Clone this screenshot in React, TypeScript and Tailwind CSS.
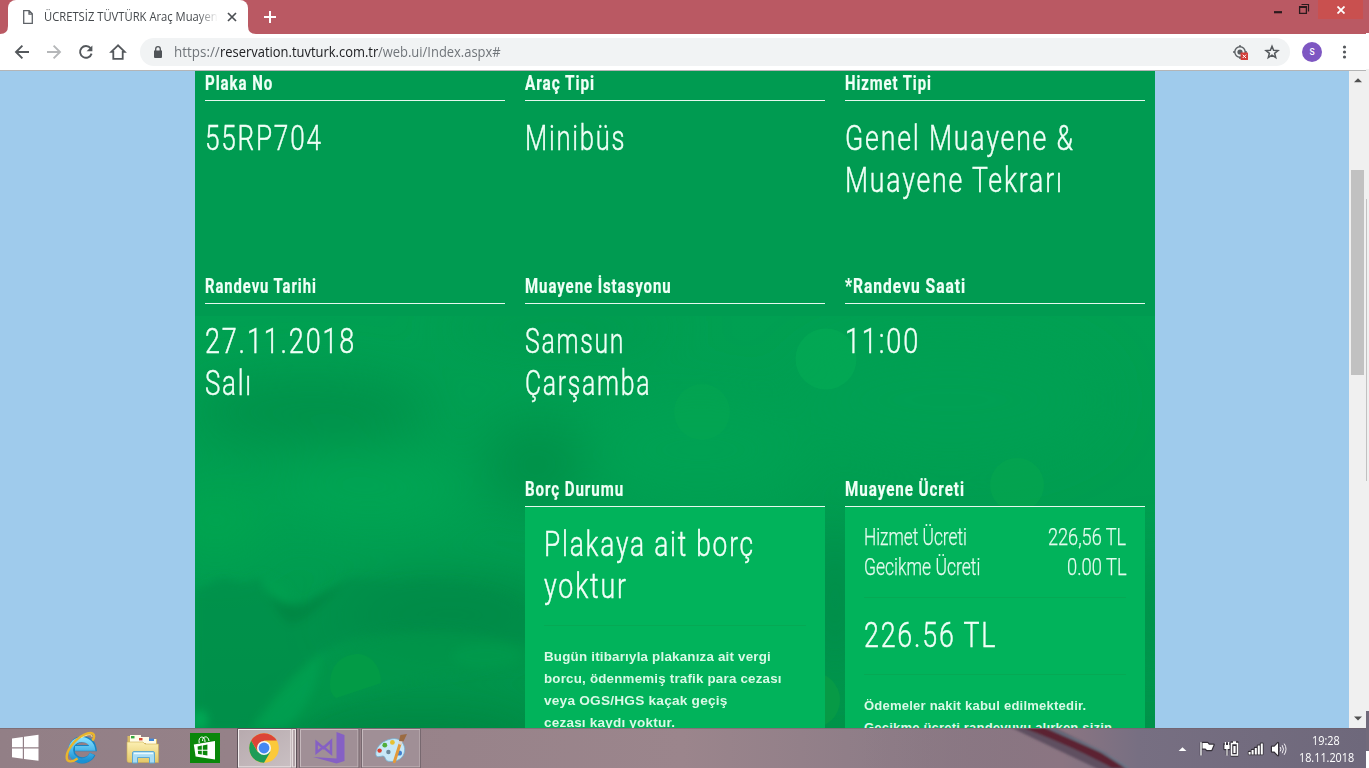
import { useLayoutEffect, useRef } from "react";

type FitProps = { text: string; width: number; className?: string };

/* Condenses a line of text horizontally so that it takes the given width. */
function Fit({ text, width, className = "" }: FitProps) {
  const ref = useRef<HTMLSpanElement>(null);
  useLayoutEffect(() => {
    const el = ref.current;
    if (el) el.style.transform = `scaleX(${width / el.offsetWidth})`;
  }, [text, width]);
  return (
    <div style={{ width }} className={className}>
      <span ref={ref} className="inline-block origin-left whitespace-nowrap align-top">
        {text}
      </span>
    </div>
  );
}

const Heading = ({ text, width }: { text: string; width: number }) => (
  <div className="h-[30px] border-b border-[#e6f8ee] pt-px">
    <Fit
      text={text}
      width={width}
      className="font-[Roboto,sans-serif] text-[19.5px] leading-[24px] font-bold tracking-[1.2px] text-[#effff6] [-webkit-text-stroke:0.2px_#effff6]"
    />
  </div>
);

const Big = ({ text, width }: { text: string; width: number }) => (
  <Fit
    text={text}
    width={width}
    className="font-[Roboto,sans-serif] text-[35px] leading-[42px] font-light tracking-[2.4px] text-[#effff6] [-webkit-text-stroke:0.45px_#effff6]"
  />
);

const Note = ({ text, width }: { text: string; width: number }) => (
  <Fit
    text={text}
    width={width}
    className="font-['Liberation_Sans',sans-serif] text-[13px] leading-[22px] font-bold tracking-[0.2px] text-[#d9f9e6]"
  />
);

type Line = [string, number];

const Cell = ({ title, lines }: { title: Line; lines: Line[] }) => (
  <div className="h-[203px] w-[300px]">
    <Heading text={title[0]} width={title[1]} />
    <div className="pt-[17px]">
      {lines.map(([t, w]) => (
        <Big key={t} text={t} width={w} />
      ))}
    </div>
  </div>
);

const Fee = ({ label, amount }: { label: Line; amount: Line }) => (
  <div className="flex h-[30px] justify-between font-[Roboto,sans-serif] text-[24px] leading-[30px] font-light text-[#e4fbee] [-webkit-text-stroke:0.25px_#e4fbee]">
    <Fit text={label[0]} width={label[1]} />
    <Fit text={amount[0]} width={amount[1]} />
  </div>
);

const Rule = () => <div className="h-px bg-[#06a954]" />;

function Backdrop() {
  return (
    <svg className="absolute inset-0 h-full w-full" viewBox="195 71 960 657">
      <defs>
        <filter id="b30" x="-50%" y="-50%" width="200%" height="200%">
          <feGaussianBlur stdDeviation="26" />
        </filter>
        <filter id="b4" x="-50%" y="-50%" width="200%" height="200%">
          <feGaussianBlur stdDeviation="4" />
        </filter>
        <linearGradient id="low" x1="0" y1="0" x2="0" y2="1">
          <stop offset="0" stopColor="#00a052" />
          <stop offset="0.6" stopColor="#009d50" />
          <stop offset="1" stopColor="#00934a" />
        </linearGradient>
        <clipPath id="clip">
          <rect x="195" y="316" width="960" height="412" />
        </clipPath>
      </defs>
      <rect x="195" y="71" width="960" height="657" fill="#009b51" />
      <g clipPath="url(#clip)">
        <rect x="195" y="316" width="960" height="412" fill="url(#low)" />
        <g filter="url(#b30)">
          <ellipse cx="310" cy="412" rx="120" ry="34" fill="#00914a" />
          <ellipse cx="535" cy="465" rx="50" ry="45" fill="#00914a" />
          <ellipse cx="560" cy="328" rx="120" ry="16" fill="#00974e" />
          <ellipse cx="370" cy="490" rx="100" ry="36" fill="#00a552" />
          <ellipse cx="215" cy="520" rx="50" ry="35" fill="#03a650" />
          <ellipse cx="700" cy="450" rx="110" ry="50" fill="#00a253" />
          <ellipse cx="950" cy="400" rx="150" ry="60" fill="#00a052" />
          <ellipse cx="835" cy="600" rx="30" ry="80" fill="#008c48" />
          <ellipse cx="1155" cy="610" rx="20" ry="60" fill="#008f49" />
          <ellipse cx="450" cy="615" rx="110" ry="35" fill="#008845" />
          <ellipse cx="420" cy="740" rx="130" ry="25" fill="#008341" />
        </g>
        <g filter="url(#b4)">
          <path d="M195 590 L222 578 L246 583 L262 576 C280 602 300 608 310 600 L352 578 L400 582 C450 575 505 590 530 612 L530 650 C470 620 380 618 330 648 C290 668 270 705 255 728 L195 728Z" fill="#008c48" opacity="0.6" />
          <path d="M262 574 C275 592 288 600 300 606 L352 578 C330 592 312 622 290 624 C276 616 268 594 262 574Z" fill="#008341" opacity="0.65" />
          <path d="M258 574 C266 596 278 604 296 604 L284 586Z" fill="#009f50" />
          <path d="M530 645 C440 622 370 630 325 660 C300 680 275 705 260 728 L290 728 C340 694 430 672 530 668Z" fill="#00964a" opacity="0.7" />
          <path d="M322 652 C300 672 270 700 252 728 L285 728 C312 705 318 680 322 652Z" fill="#00a050" opacity="0.8" />
          <ellipse cx="486" cy="656" rx="34" ry="12" fill="#009b4d" opacity="0.6" />
          <ellipse cx="200" cy="720" rx="8" ry="10" fill="#00a854" />
        </g>
        <circle cx="826" cy="359" r="30.5" fill="#03aa55" opacity="0.65" />
        <circle cx="702" cy="412" r="28" fill="#06aa51" opacity="0.35" />
        <circle cx="1017" cy="485" r="27" fill="#07a94e" opacity="0.45" />
        <circle cx="812" cy="700" r="28" fill="#0a9d45" opacity="0.7" />
        <path d="M330 684 C330 662 345 654 359 654 C373 656 381 668 381 683 L336 698 C331 694 330 690 330 684Z" fill="#029b46" />
      </g>
    </svg>
  );
}

const UI = "font-['Open_Sans','Noto_Sans',sans-serif]";

function TitleBar() {
  return (
    <div className="flex h-[34px] bg-[#ba5963]">
      <svg width="8" height="34" viewBox="0 0 8 34">
        <path d="M8 26 V34 H0 Q8 34 8 26Z" fill="#fff" />
      </svg>
      <div className="flex h-[34px] w-[240px] items-center rounded-t-[8px] bg-white pl-[15px]">
        <svg width="10" height="14" viewBox="0 0 10 14" fill="none" stroke="#5f6368" strokeWidth="1.3">
          <path d="M0.7 0.7 H6.2 L9.3 3.8 V13.3 H0.7Z M6 0.9 V4.1 H9.2" />
        </svg>
        <div className="ml-[11px] w-[174px] overflow-hidden mask-r-from-88%">
          <Fit
            text="ÜCRETSİZ TÜVTÜRK Araç Muayen"
            width={174}
            className={"font-['Open_Sans','Noto_Sans',sans-serif] text-[12px] leading-[18px] text-[#45494d]"}
          />
        </div>
        <svg className="ml-[9px]" width="10" height="10" viewBox="0 0 10 10" stroke="#4b4f53" strokeWidth="1.7">
          <path d="M1 1 L9 9 M9 1 L1 9" />
        </svg>
      </div>
      <svg width="8" height="34" viewBox="0 0 8 34">
        <path d="M0 26 V34 H8 Q0 34 0 26Z" fill="#fff" />
      </svg>
      <svg className="mt-[11px] ml-2" width="12" height="12" viewBox="0 0 12 12" stroke="#fff" strokeWidth="2">
        <path d="M6 0 V12 M0 6 H12" />
      </svg>
      <div className="flex-1" />
      <svg className="mt-[3px] mr-[7px]" width="38" height="14" viewBox="0 0 38 14" fill="none" stroke="#2b1a1d">
        <path d="M1 9.2 H9" strokeWidth="2.2" />
        <path d="M26.6 4 H33.4 V10.4 H26.6Z" strokeWidth="1.3" />
        <path d="M26 4 H34" strokeWidth="2" />
        <path d="M28.5 1.5 H35.5 V8.5" strokeWidth="1.2" />
      </svg>
      <div className="mr-[3px] flex h-[19px] w-[45px] items-center justify-center bg-[#c9504f]">
        <svg width="8" height="8" viewBox="0 0 8 8" stroke="#fff" strokeWidth="1.8">
          <path d="M0.5 0.5 L7.5 7.5 M7.5 0.5 L0.5 7.5" />
        </svg>
      </div>
    </div>
  );
}

function Toolbar() {
  return (
    <div className="flex h-[37px] items-center border-b border-[#b4b5b6] bg-white">
      <svg className="ml-[14px]" width="114" height="18" viewBox="14 43 114 18" fill="none" stroke="#54585c" strokeWidth="1.9">
        <path d="M29 52 H16.2 M22.4 45.6 L16 52 L22.4 58.4" />
        <path d="M47 52 H60 M53.6 45.6 L60 52 L53.6 58.4" stroke="#b5b7b9" />
        <path d="M90.6 48.2 A5.9 5.9 0 1 0 91.6 53.6" />
        <path d="M92.4 45.4 V51.2 H86.6Z" fill="#54585c" stroke="none" />
        <path d="M118 45.3 L111.3 51.8 H113.3 V58.8 H122.7 V51.8 H124.7Z" strokeWidth="1.8" />
      </svg>
      <div className="ml-[12px] flex h-7 w-[1150px] items-center rounded-full bg-[#f1f3f4] pl-[14px]">
        <svg width="8" height="12" viewBox="0 0 8 12">
          <path d="M0 4.5 H8 V11 Q8 12 7 12 H1 Q0 12 0 11Z" fill="#505458" />
          <path d="M1.7 5 V3 A2.3 2.3 0 0 1 6.3 3 V5" fill="none" stroke="#505458" strokeWidth="1.3" />
        </svg>
        <div className="ml-3 flex text-[14px] leading-[20px]">
          <Fit text="https://" width={46} className="font-['Open_Sans','Noto_Sans',sans-serif] text-[#70757a]" />
          <Fit text="reservation.tuvturk.com.tr" width={158} className="font-['Open_Sans','Noto_Sans',sans-serif] text-[#202124]" />
          <Fit text="/web.ui/Index.aspx#" width={123} className="font-['Open_Sans','Noto_Sans',sans-serif] text-[#70757a]" />
        </div>
        <div className="flex-1" />
        <svg className="mr-[10px]" width="48" height="18" viewBox="1232 43 48 18">
          <circle cx="1240" cy="52" r="5.2" fill="none" stroke="#5b5f63" strokeWidth="1.4" />
          <path d="M1240 45 V47 M1233 52 H1235 M1240 57 V59 M1245 52 H1247" stroke="#5b5f63" strokeWidth="1.4" />
          <circle cx="1240" cy="52" r="2.6" fill="#5b5f63" />
          <rect x="1240.6" y="52.6" width="7.4" height="7.4" rx="0.6" fill="#d23f3a" />
          <path d="M1242.7 54.7 L1246 58 M1246 54.7 L1242.7 58" stroke="#fff" strokeWidth="1" />
          <path d="M1272 46.2 L1273.6 50.2 L1278 50.5 L1274.6 53.3 L1275.7 57.6 L1272 55.2 L1268.3 57.6 L1269.4 53.3 L1266 50.5 L1270.4 50.2Z" fill="none" stroke="#54585c" strokeWidth="1.5" />
        </svg>
      </div>
      <div className="ml-[12px] flex h-5 w-5 items-center justify-center rounded-full bg-[#7e57c2] font-[Roboto,sans-serif] text-[8.5px] font-medium text-white">
        S
      </div>
      <svg className="ml-[20px]" width="5" height="14" viewBox="0 0 5 14" fill="#54585c">
        <circle cx="2.5" cy="2" r="1.6" />
        <circle cx="2.5" cy="7" r="1.6" />
        <circle cx="2.5" cy="12" r="1.6" />
      </svg>
    </div>
  );
}

function Scrollbar() {
  return (
    <div className="flex w-[17px] flex-col items-center bg-[#f0f0f0]">
      <svg className="mt-[7px]" width="8" height="5" viewBox="0 0 8 5" fill="#505050">
        <path d="M4 0.3 L8 4.3 H0Z" />
      </svg>
      <div className="mt-[87px] h-[205px] w-[13px] bg-[#c1c1c1]" />
      <div className="flex-1" />
      <svg className="mb-[7px]" width="8" height="5" viewBox="0 0 8 5" fill="#505050">
        <path d="M4 4.5 L8 0.5 H0Z" />
      </svg>
    </div>
  );
}

function Page() {
  return (
    <div className="flex h-[657px] overflow-hidden">
      <div className="flex flex-1 bg-[#9fcbec]">
        <div className="relative ml-[195px] h-[657px] w-[960px] overflow-hidden">
          <Backdrop />
          <div className="relative grid grid-cols-[300px_300px_300px] gap-x-5 pl-[10px]">
            <Cell title={["Plaka No", 68]} lines={[["55RP704", 118]]} />
            <Cell title={["Araç Tipi", 70]} lines={[["Minibüs", 101]]} />
            <Cell title={["Hizmet Tipi", 87]} lines={[["Genel Muayene &", 230], ["Muayene Tekrarı", 219]]} />
            <Cell title={["Randevu Tarihi", 112]} lines={[["27.11.2018", 151], ["Salı", 48]]} />
            <Cell title={["Muayene İstasyonu", 147]} lines={[["Samsun", 100], ["Çarşamba", 126]]} />
            <Cell title={["*Randevu Saati", 121]} lines={[["11:00", 75]]} />
            <div />
            <div className="w-[300px]">
              <Heading text="Borç Durumu" width={99} />
              <div className="h-[260px] bg-[#01b35b] px-[19px] pt-[17px]">
                <Big text="Plakaya ait borç" width={211} />
                <Big text="yoktur" width={84} />
                <div className="mt-[17px] mb-5">
                  <Rule />
                </div>
                <Note text="Bugün itibarıyla plakanıza ait vergi" width={227} />
                <Note text="borcu, ödenmemiş trafik para cezası" width={238} />
                <Note text="veya OGS/HGS kaçak geçiş" width={184} />
                <Note text="cezası kaydı yoktur." width={131} />
              </div>
            </div>
            <div className="w-[300px]">
              <Heading text="Muayene Ücreti" width={120} />
              <div className="h-[260px] bg-[#01b35b] px-[19px] pt-[15px]">
                <Fee label={["Hizmet Ücreti", 103]} amount={["226,56 TL", 78.5]} />
                <Fee label={["Gecikme Ücreti", 116]} amount={["0.00 TL", 59.5]} />
                <div className="mt-[15px] mb-[17px]">
                  <Rule />
                </div>
                <Big text="226.56 TL" width={133} />
                <div className="mt-[17px] mb-5">
                  <Rule />
                </div>
                <Note text="Ödemeler nakit kabul edilmektedir." width={222} />
                <Note text="Gecikme ücreti randevuyu alırken sizin" width={248} />
              </div>
            </div>
          </div>
        </div>
      </div>
      <Scrollbar />
    </div>
  );
}

function Taskbar() {
  return (
    <div className="relative flex h-10 bg-linear-to-r from-[#927f86] via-[#9b858c] to-[#6e687b]">
      <svg className="absolute inset-0" width="1366" height="40" viewBox="0 728 1366 40">
        <defs>
          <linearGradient id="wall" x1="0" y1="0" x2="1" y2="0">
            <stop offset="0" stopColor="#8c7680" stopOpacity="0" />
            <stop offset="0.4" stopColor="#8b7582" />
            <stop offset="0.55" stopColor="#776f82" />
            <stop offset="1" stopColor="#6e687b" />
          </linearGradient>
          <filter id="edge" x="-10%" y="-10%" width="120%" height="120%">
            <feGaussianBlur stdDeviation="0.9" />
          </filter>
        </defs>
        <rect x="860" y="728" width="506" height="40" fill="url(#wall)" />
        <g filter="url(#edge)">
          <path d="M1012 728 L1055 728 L1106 753 L1128 770 L1100 770Z" fill="#5f4f60" />
          <path d="M1024 728 L1044 728 L1100 752 L1124 768 L1112 768 C1088 754 1050 738 1024 728Z" fill="#5b2230" />
          <path d="M1050 728 L1102 752 L1128 768" stroke="#667889" strokeWidth="1.6" fill="none" />
        </g>
        <rect x="0" y="728" width="1366" height="1" fill="#6f6068" opacity="0.55" />
      </svg>
      <svg className="relative" width="421" height="40" viewBox="0 728 421 40">
        <defs>
          <linearGradient id="act" x1="0" y1="0" x2="1" y2="1">
            <stop offset="0" stopColor="#b7aaae" />
            <stop offset="1" stopColor="#c9bfc2" />
          </linearGradient>
          <linearGradient id="ie" x1="0" y1="0" x2="0" y2="1">
            <stop offset="0" stopColor="#7fdcff" />
            <stop offset="1" stopColor="#1a91d4" />
          </linearGradient>
          <linearGradient id="fold" x1="0" y1="0" x2="0" y2="1">
            <stop offset="0" stopColor="#fbefb2" />
            <stop offset="1" stopColor="#e4c868" />
          </linearGradient>
        </defs>
        <path d="M12 738.6 L22.8 737 V747.2 H12Z M24 736.8 L38.5 734.8 V747.2 H24Z M12 748.4 H22.8 V758.8 L12 757.2Z M24 748.4 H38.5 V760.8 L24 758.9Z" fill="#fff" />

        <path d="M92.6 754 A11 10.6 0 1 1 93.4 748.2 H74.6" fill="none" stroke="#1785c4" strokeWidth="6.2" />
        <path d="M92 754 A11 10.6 0 1 1 92.6 748.4 H75" fill="none" stroke="url(#ie)" strokeWidth="4.8" />
        <path d="M92.4 740.6 C97 734 92 730.8 84 734.8 C74 739.8 65.6 751.4 66.8 758.6 C67.8 763 73 761.6 77.6 758.4" fill="none" stroke="#e9b52c" strokeWidth="2.4" />
        <path d="M92 737 C92 733 86 735 81 738" fill="none" stroke="#ffe887" strokeWidth="1" />

        <path d="M127.5 736 H137 L139 739 H157 V762 H127.5Z" fill="#d8bb66" />
        <rect x="130" y="735" width="11" height="7" fill="#fffbe6" />
        <rect x="138" y="737" width="11" height="6" fill="#fffbe6" />
        <rect x="146" y="739" width="10" height="5" fill="#fffbe6" />
        <rect x="131" y="736" width="3.5" height="2.4" fill="#36a93f" />
        <rect x="139" y="738" width="3.5" height="2.4" fill="#d84a34" />
        <rect x="149" y="738.6" width="5" height="2.4" fill="#3f86d8" />
        <path d="M127 742 H143 L145 744 H158.5 V762.5 H129 Q127 762.5 127 760Z" fill="url(#fold)" stroke="#cfae55" strokeWidth="0.6" />
        <path d="M132.5 763 V753 Q132.5 751.5 134 751.5 H153 Q154.5 751.5 154.5 753 V763 H149.5 V757.5 H137.5 V763Z" fill="#a9dcf4" stroke="#5fa9d0" strokeWidth="1" />
        <path d="M134 753.5 H153" stroke="#e9f9ff" strokeWidth="1.4" />

        <rect x="190" y="733" width="30" height="30" fill="#0a870a" />
        <path d="M199.2 743 C197.6 735.4 205.4 735 205 742 M202.6 741 C202.2 736 208.4 735 209 741" fill="none" stroke="#fff" strokeWidth="1" />
        <path d="M193.8 744.6 L215 741 V759.4 L195.6 756.6Z" fill="#fff" />
        <path d="M197.6 746.4 L201.8 745.6 V749.8 H197.8Z M202.8 745.4 L207.4 744.6 V749.8 H202.8Z M197.9 750.8 H201.8 V754.6 L198.1 754.1Z M202.8 750.8 H207.4 V755.4 L202.8 754.8Z" fill="#0a870a" />

        <rect x="238.5" y="729.5" width="52.5" height="37.5" fill="url(#act)" stroke="#f4efef" />
        <path d="M237.5 768 V728.5 H296.5 V768" fill="none" stroke="#5e5259" />
        <rect x="292.5" y="729.5" width="3" height="37.5" fill="#b3a4a9" stroke="#e6dedf" />
        <circle cx="264" cy="748" r="14.8" fill="#fbc93a" />
        <path d="M251.2 740.6 A14.8 14.8 0 0 0 264 762.8 L270.4 751.7 L257.6 751.7Z" fill="#1d9c58" />
        <path d="M251.2 740.6 A14.8 14.8 0 0 1 276.8 740.6 H264 L257.4 751Z" fill="#dc4437" />
        <circle cx="264" cy="748" r="7" fill="#f6f6f6" />
        <circle cx="264" cy="748" r="5.4" fill="#4587f3" />

        <rect x="300.5" y="729.5" width="57.5" height="37.5" fill="#a08f96" stroke="#c6b9bd" />
        <rect x="299.5" y="728.5" width="59.5" height="39.5" fill="none" stroke="#77686f" />
        <path d="M336.5 732 L344.5 735 V761 L336.5 763.4 L313 757 L336.5 758.6Z" fill="#8560c4" />
        <path d="M316.6 742.2 L323.4 748 L331 741 V753.4 L323.4 747 L316.6 752.4Z" fill="none" stroke="#8560c4" strokeWidth="2.5" />

        <rect x="362.5" y="729.5" width="57.5" height="37.5" fill="#a08f96" stroke="#c6b9bd" />
        <rect x="361.5" y="728.5" width="59" height="39.5" fill="none" stroke="#77686f" />
        <path d="M391 739 C401 736.8 405.4 745 404.6 751 C403.6 758.6 396.6 762.6 388 761.2 C384.8 760.6 386 756.4 383 756 C379 756.4 375.6 758.4 375.8 753 C376.6 746 382.6 740.8 391 739Z" fill="#c8e8f7" stroke="#75b1d2" strokeWidth="0.8" />
        <circle cx="379.6" cy="750.6" r="2.2" fill="#d9412f" />
        <circle cx="384.8" cy="745.2" r="2.4" fill="#4fae3a" />
        <circle cx="392.4" cy="742.4" r="2.4" fill="#e8c131" />
        <circle cx="388.4" cy="752" r="2.2" fill="#6d8a9c" />
        <circle cx="399.4" cy="753" r="2.6" fill="#3f7fd0" />
        <path d="M394.4 761.6 L400 744" stroke="#e39a3b" strokeWidth="3" strokeLinecap="round" />
        <path d="M399.6 744.4 L401 740.6" stroke="#d8d8d8" strokeWidth="3.4" />
        <path d="M399 741 L400.4 735 L407 734 L403.4 741.6Z" fill="#9b6b42" />
      </svg>
      <div className="flex-1" />
      <svg className="relative" width="120" height="40" viewBox="1172 728 120 40">
        <path d="M1182.5 747.2 L1186.4 751 H1178.6Z" fill="#fff" />
        <g stroke="#353039" strokeWidth="2.4" strokeLinejoin="round" fill="#353039">
          <path d="M1201 742.6 V755.4" />
          <path d="M1202.5 743 H1207.6 L1209 744.8 H1213.6 L1211.4 750 H1207 L1205.4 748.6 H1202.5Z" />
          <path d="M1231.5 742.5 H1237.5 V755.5 H1231.5Z" />
          <path d="M1224.5 744 H1229.5 V749 H1224.5Z M1227 749 V755" />
          <path d="M1249 752 H1250.6 V754 H1249Z M1252 750 H1253.6 V754 H1252Z M1255 748 H1256.6 V754 H1255Z M1258 745.6 H1259.6 V754 H1258Z M1261 743.6 H1262.4 V754 H1261Z" />
          <path d="M1272 746.8 H1274.4 L1278 743 V755.2 L1274.4 751.6 H1272Z" />
        </g>
        <path d="M1201 742.2 V755.6" stroke="#fff" strokeWidth="1.4" />
        <path d="M1202.5 743 H1207.6 L1209 744.8 H1213.6 L1211.4 750 H1207 L1205.4 748.6 H1202.5Z" fill="#fff" />
        <path d="M1231.5 743.5 H1237.5 V755 H1231.5Z M1233 742 H1236" fill="none" stroke="#fff" strokeWidth="1.5" />
        <path d="M1233.4 746 H1235.6 V753 H1233.4Z" fill="#fff" />
        <path d="M1225.4 742 V745 M1228.6 742 V745 M1227 749 V755.6" stroke="#fff" strokeWidth="1.2" />
        <path d="M1224.4 745 H1229.6 V749 H1224.4Z" fill="#fff" />
        <path d="M1248.6 752 H1250.6 V754.6 H1248.6Z M1251.6 750 H1253.6 V754.6 H1251.6Z M1254.8 748 H1256.8 V754.6 H1254.8Z M1257.8 745.6 H1259.8 V754.6 H1257.8Z M1260.8 743.4 H1262.8 V754.6 H1260.8Z" fill="#fff" />
        <path d="M1272 746.8 H1274.4 L1278 743 V755.2 L1274.4 751.6 H1272Z" fill="#fff" />
        <path d="M1280.2 747 Q1281.6 749.2 1280.2 751.4 M1282.2 745.2 Q1284.8 749.2 1282.2 753.2 M1284.2 743.6 Q1287.8 749.2 1284.2 754.8" fill="none" stroke="#f3f0f4" strokeWidth="1" />
      </svg>
      <div className="relative mr-[12px] ml-[6px] flex w-[56px] flex-col items-center pt-[4px] text-[12px] leading-[17px] text-white">
        <Fit text="19:28" width={28} className="font-['Open_Sans','Noto_Sans',sans-serif]" />
        <Fit text="18.11.2018" width={55} className="font-['Open_Sans','Noto_Sans',sans-serif]" />
      </div>
    </div>
  );
}

/* Sliver of the window behind, visible along the right edge. */
function Sliver() {
  return (
    <div className="flex w-[3px] flex-col bg-[#f0f0f0]">
      <div className="h-[33px] bg-[#ba5963]" />
      <div className="h-9 bg-white" />
      <div className="mt-[130px] h-[282px] w-px bg-[#c1c1c1]" />
      <div className="flex-1" />
      <div className="h-10 bg-[#716a7b]" />
      <div className="h-[17px] bg-white" />
    </div>
  );
}

export default function App() {
  return (
    <div className={`flex h-[768px] w-[1369px] overflow-hidden ${UI}`}>
      <div className="flex w-[1366px] flex-col">
        <TitleBar />
        <Toolbar />
        <Page />
        <Taskbar />
      </div>
      <Sliver />
    </div>
  );
}
